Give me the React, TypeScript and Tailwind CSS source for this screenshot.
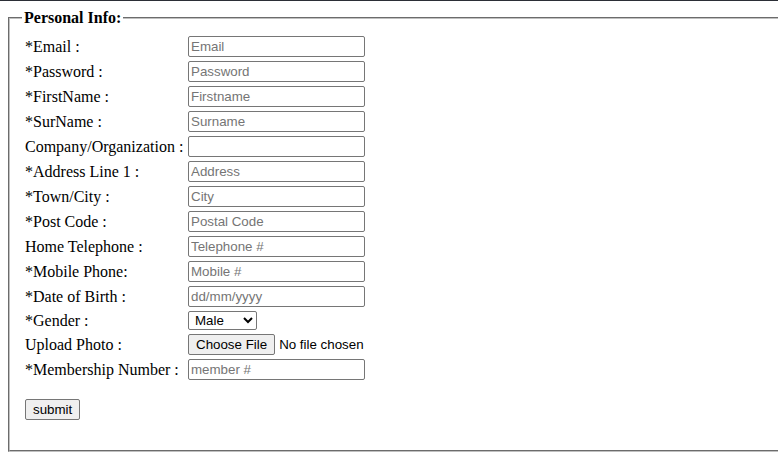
import React from "react";

interface Field {
  label: string;
  required: boolean;
  placeholder?: string;
  type?: string;
}

const fieldsTop: Field[] = [
  { label: "Email :", required: true, placeholder: "Email" },
  { label: "Password :", required: true, placeholder: "Password", type: "password" },
  { label: "FirstName :", required: true, placeholder: "Firstname" },
  { label: "SurName :", required: true, placeholder: "Surname" },
  { label: "Company/Organization :", required: false, placeholder: "" },
  { label: "Address Line 1 :", required: true, placeholder: "Address" },
  { label: "Town/City :", required: true, placeholder: "City" },
  { label: "Post Code :", required: true, placeholder: "Postal Code" },
  { label: "Home Telephone :", required: false, placeholder: "Telephone #" },
  { label: "Mobile Phone:", required: true, placeholder: "Mobile #" },
  { label: "Date of Birth :", required: true, placeholder: "dd/mm/yyyy" },
];

const inputClass =
  "w-[177px] h-[21px] border border-[#767676] rounded-[2px] px-[2px] bg-white text-black font-['Liberation_Sans',Arial,sans-serif] text-[13.333px] leading-none placeholder:text-[#757575] outline-none";

const btnClass =
  "h-[21px] border border-[#767676] rounded-[2px] bg-[#efefef] px-[7px] text-black font-['Liberation_Sans',Arial,sans-serif] text-[13.333px] leading-none";

const Label = ({ text, required }: { text: string; required: boolean }) => (
  <span className="whitespace-nowrap leading-[18px]">
    {required && "*"}
    {text}
  </span>
);

const App = () => {
  return (
    <div className="w-[778px] h-[474px] overflow-hidden bg-white text-black font-['Liberation_Serif','Times_New_Roman',serif] text-[16px] leading-[18px]">
      <div className="h-px bg-[#2b2e36]" />
      <div className="pt-[8px] pl-[8px]">
        <form onSubmit={(e) => e.preventDefault()}>
          <fieldset className="w-[800px] border-2 [border-style:groove] border-[#c0c0c0] px-[12px] pt-[6px] pb-[10px]">
            <legend className="px-[2px] font-bold leading-[18px]">Personal Info:</legend>
            <div className="grid grid-cols-[163px_auto] gap-y-[4px] items-center pt-[3px] pl-[3px]">
              {fieldsTop.map((f) => (
                <React.Fragment key={f.label}>
                  <Label text={f.label} required={f.required} />
                  <div className="flex">
                    <input
                      type={f.type || "text"}
                      placeholder={f.placeholder}
                      className={inputClass}
                    />
                  </div>
                </React.Fragment>
              ))}
              <Label text="Gender :" required={true} />
              <div className="flex">
                <select className="w-[69px] h-[19px] border border-[#767676] rounded-[2px] bg-white text-black font-['Liberation_Sans',Arial,sans-serif] text-[13.333px] leading-none pl-[2px]">
                  <option>Male</option>
                  <option>Female</option>
                </select>
              </div>
              <Label text="Upload Photo :" required={false} />
              <div className="flex items-center gap-[4px] font-['Liberation_Sans',Arial,sans-serif] text-[13.333px]">
                <button type="button" className={btnClass}>
                  Choose File
                </button>
                <span>No file chosen</span>
              </div>
              <Label text="Membership Number :" required={true} />
              <div className="flex">
                <input type="text" placeholder="member #" className={inputClass} />
              </div>
            </div>
            <div className="pl-[3px] pt-[19px] pb-[20px]">
              <button type="submit" className={btnClass}>
                submit
              </button>
            </div>
          </fieldset>
        </form>
      </div>
    </div>
  );
};

export default App;
